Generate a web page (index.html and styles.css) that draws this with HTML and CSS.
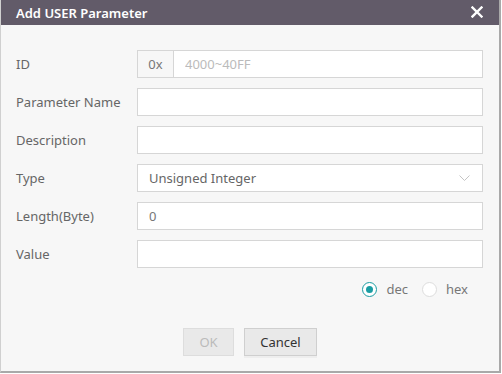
FILE: index.html
```html
<!DOCTYPE html>
<html lang="en">
<head>
  <meta charset="UTF-8">
  <title>Add USER Parameter</title>
  <link rel="stylesheet" href="styles.css">
</head>
<body>
  <div class="dialog">
    <div class="dialog-header">
      <span class="dialog-title">Add USER Parameter</span>
      <span class="close-btn">
        <svg width="12" height="12" viewBox="0 0 12 12">
          <path d="M1.5 1.5 L10.5 10.5 M10.5 1.5 L1.5 10.5" stroke="#fff" stroke-width="2.4" stroke-linecap="square"/>
        </svg>
      </span>
    </div>
    <div class="dialog-body">
      <div class="form">
        <label>ID</label>
        <div class="input-group">
          <span class="addon">0x</span>
          <input type="text" placeholder="4000~40FF">
        </div>

        <label>Parameter Name</label>
        <input type="text">

        <label>Description</label>
        <input type="text">

        <label>Type</label>
        <div class="select">
          <span>Unsigned Integer</span>
          <svg width="11" height="7" viewBox="0 0 11 7">
            <path d="M0.5 0.5 L5.5 5.5 L10.5 0.5" fill="none" stroke="#c4c4c4" stroke-width="1"/>
          </svg>
        </div>

        <label>Length(Byte)</label>
        <input type="text" value="0">

        <label>Value</label>
        <input type="text">
      </div>

      <div class="radios">
        <span class="radio checked"><i></i>dec</span>
        <span class="radio"><i></i>hex</span>
      </div>

      <div class="buttons">
        <button class="btn btn-ok" disabled>OK</button>
        <button class="btn btn-cancel">Cancel</button>
      </div>
    </div>
  </div>
</body>
</html>
```

FILE: styles.css
```css
body {
  margin: 0;
  font-family: 'Noto Sans', 'Open Sans', sans-serif;
  background: #fff;
}

.dialog {
  width: 501px;
  height: 373px;
  box-sizing: border-box;
  background: #f7f7f7;
  border-left: 1px solid #d0d0d0;
  border-right: 2px solid #a9a9a9;
  border-bottom: 2px solid #a9a9a9;
}

.dialog-header {
  height: 25px;
  background: #625b69;
  display: flex;
  align-items: center;
  justify-content: space-between;
  padding: 0 16px 0 15px;
}

.dialog-title {
  color: #fff;
  font-size: 13px;
  font-weight: 600;
}

.close-btn {
  display: flex;
  margin-top: -1px;
}

.dialog-body {
  padding: 25px 16px 0 15px;
}

.form {
  display: grid;
  grid-template-columns: 121px 1fr;
  grid-auto-rows: 28px;
  row-gap: 10px;
  align-items: center;
}

.form label {
  font-size: 13px;
  color: #666;
}

input {
  box-sizing: border-box;
  width: 100%;
  height: 28px;
  border: 1px solid #d6d6d6;
  background: #fff;
  padding: 0 11px;
  font-family: inherit;
  font-size: 13px;
  color: #777;
  outline: none;
}

input::placeholder {
  color: #bbb;
}

.input-group {
  display: flex;
  height: 28px;
}

.addon {
  width: 36px;
  box-sizing: border-box;
  border: 1px solid #d6d6d6;
  border-right: none;
  background: #f7f7f7;
  font-size: 13px;
  color: #777;
  display: flex;
  align-items: center;
  justify-content: center;
}

.input-group input {
  flex: 1;
}

.select {
  box-sizing: border-box;
  height: 28px;
  border: 1px solid #d6d6d6;
  background: #fff;
  display: flex;
  align-items: center;
  justify-content: space-between;
  padding: 0 12px 0 11px;
  font-size: 13px;
  color: #666;
}

.radios {
  display: flex;
  justify-content: flex-end;
  gap: 14px;
  margin-top: 12px;
  padding-right: 15px;
}

.radio {
  display: flex;
  align-items: center;
  font-size: 13px;
  color: #777;
  gap: 9px;
}

.radio i {
  width: 15px;
  height: 15px;
  box-sizing: border-box;
  border-radius: 50%;
  border: 1px solid #ddd;
  background: #fff;
  position: relative;
}

.radio.checked i {
  border-color: #1a9da3;
}

.radio.checked i::after {
  content: '';
  position: absolute;
  left: 3px;
  top: 3px;
  width: 7px;
  height: 7px;
  border-radius: 50%;
  background: #1a9da3;
}

.buttons {
  display: flex;
  gap: 10px;
  margin-top: 30px;
  padding-left: 167px;
}

.btn {
  height: 28px;
  padding: 0;
  border: 1px solid #cfcfcf;
  background: #e9e9e9;
  font-family: inherit;
  font-size: 13px;
  color: #333;
  box-shadow: 0 2px 0 #eee;
}

.btn-ok {
  width: 51px;
}

.btn-cancel {
  width: 73px;
}

.btn:disabled {
  color: #bbb;
  border-color: #ddd;
  box-shadow: none;
}
```
